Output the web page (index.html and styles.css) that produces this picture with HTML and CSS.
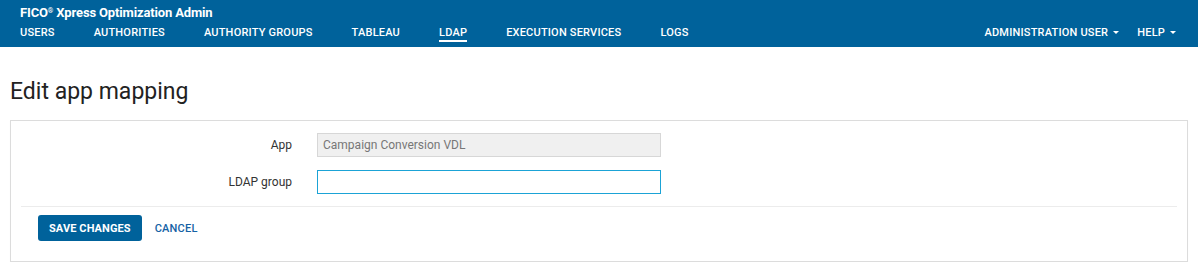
FILE: index.html
```html
<!DOCTYPE html>
<html lang="en">

<head>
    <meta charset="UTF-8">
    <meta name="viewport" content="width=device-width, initial-scale=1.0">
    <title>Xpress Optimization Admin</title>
    <link rel="stylesheet" href="styles.css">
</head>

<body>
    <header class="top-bar">
        <div class="brand">FICO<sup class="reg">®</sup> Xpress Optimization Admin</div>
        <nav class="nav-row">
            <div class="nav-left">
                <a class="nav-link" href="#">Users</a>
                <a class="nav-link" href="#">Authorities</a>
                <a class="nav-link" href="#">Authority groups</a>
                <a class="nav-link" href="#">Tableau</a>
                <a class="nav-link active" href="#">LDAP</a>
                <a class="nav-link" href="#">Execution services</a>
                <a class="nav-link" href="#">Logs</a>
            </div>
            <div class="nav-right">
                <a class="nav-link dropdown" href="#">Administration user <span class="caret"></span></a>
                <a class="nav-link dropdown" href="#">Help <span class="caret"></span></a>
            </div>
        </nav>
    </header>

    <main class="page">
        <h1 class="page-title">Edit app mapping</h1>
        <div class="card">
            <form class="mapping-form">
                <label class="form-label" for="app">App</label>
                <input class="form-input" id="app" type="text" value="Campaign Conversion VDL" disabled>
                <label class="form-label" for="group">LDAP group</label>
                <input class="form-input focused" id="group" type="text">
            </form>
            <div class="card-footer">
                <button type="button" class="btn-save">Save changes</button>
                <button type="button" class="btn-cancel">Cancel</button>
            </div>
        </div>
    </main>
</body>

</html>
```

FILE: styles.css
```css
body {
    margin: 0;
    font-family: Roboto, "Liberation Sans", sans-serif;
    color: #222;
    background: #fff;
}

.top-bar {
    height: 47px;
    box-sizing: border-box;
    padding: 4px 22px 0 20px;
    background-color: #00629b;
    color: #fff;
}

.brand {
    font-size: 13px;
    font-weight: 700;
    letter-spacing: -0.15px;
    line-height: 18px;
}

.reg {
    font-size: 7px;
    vertical-align: 4px;
    line-height: 0;
}

.nav-row {
    display: flex;
    justify-content: space-between;
    margin-top: 4px;
}

.nav-left,
.nav-right {
    display: flex;
    gap: 39px;
}

.nav-right {
    gap: 18px;
}

.nav-link {
    color: #fff;
    text-decoration: none;
    text-transform: uppercase;
    font-size: 11px;
    font-weight: 500;
    letter-spacing: 0.2px;
    line-height: 13px;
    padding-bottom: 1px;
    border-bottom: 2px solid transparent;
}

.nav-link.active {
    border-bottom-color: #fff;
}

.dropdown {
    display: flex;
    align-items: center;
    gap: 5px;
}

.caret {
    width: 0;
    height: 0;
    border-left: 3px solid transparent;
    border-right: 3px solid transparent;
    border-top: 3px solid #fff;
    margin-top: -1px;
}

.page {
    padding: 0 10px;
}

.page-title {
    margin: 31px 0 14px;
    font-size: 23px;
    font-weight: 400;
    line-height: 28px;
    color: #222;
}

.card {
    border: 1px solid #dcdcdc;
    box-shadow: 0 1px 1px rgba(0, 0, 0, 0.04);
    padding: 12px 10px 20px;
}

.mapping-form {
    display: grid;
    grid-template-columns: 259px 344px;
    column-gap: 25px;
    row-gap: 13px;
    align-items: center;
    padding: 0 0 12px 12px;
    border-bottom: 1px solid #ececec;
}

.form-label {
    text-align: right;
    font-size: 12px;
    color: #333;
}

.form-input {
    height: 24px;
    box-sizing: border-box;
    border: 1px solid #d7d7d7;
    padding: 0 5px;
    font-family: inherit;
    font-size: 12px;
    color: #777;
    background: #fff;
    outline: none;
}

.form-input:disabled {
    background-color: #f0f0f0;
    color: #777;
}

.form-input.focused {
    border-color: #1ba3d6;
}

.card-footer {
    display: flex;
    align-items: center;
    gap: 13px;
    padding: 8px 0 0 17px;
}

.btn-save {
    height: 26px;
    padding: 0 11px;
    border: none;
    border-radius: 3px;
    background-color: #00629b;
    color: #fff;
    font-family: inherit;
    font-size: 11px;
    font-weight: 700;
    letter-spacing: 0.1px;
    text-transform: uppercase;
    cursor: pointer;
}

.btn-cancel {
    padding: 0;
    border: none;
    background: none;
    color: #1562a5;
    font-family: inherit;
    font-size: 11px;
    font-weight: 500;
    letter-spacing: 0.2px;
    text-transform: uppercase;
    cursor: pointer;
}
```
